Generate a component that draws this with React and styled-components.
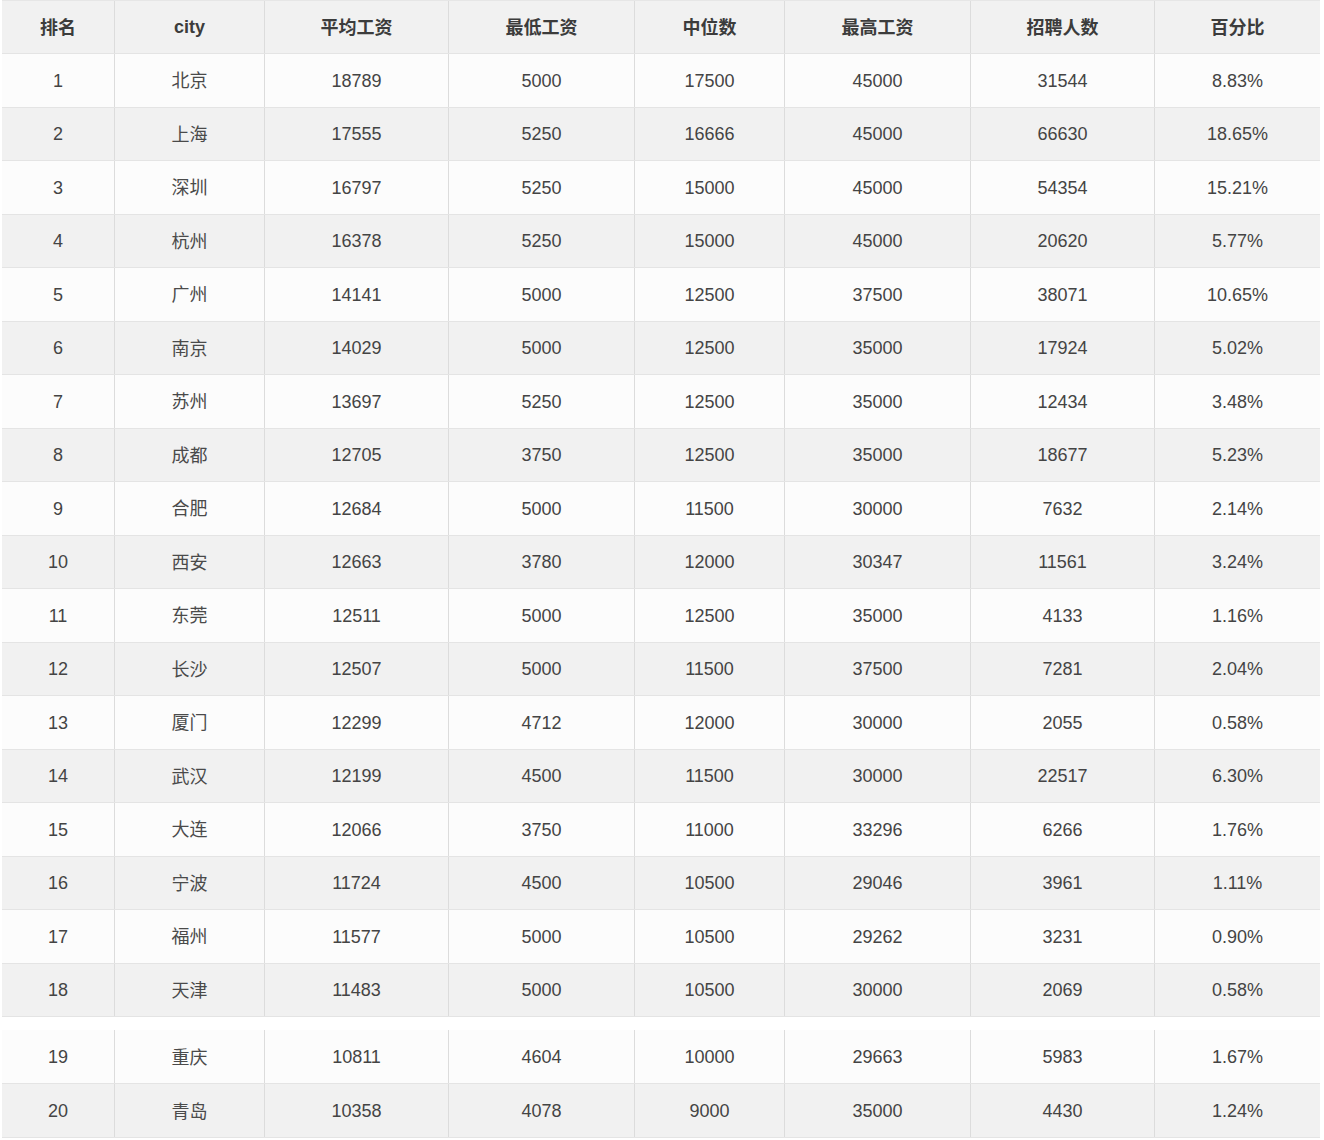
import React from "react";
import styled, { createGlobalStyle } from "styled-components";

const Global = createGlobalStyle`
  html, body { margin: 0; padding: 0; background: #ffffff; }
  body { font-family: "Liberation Sans", Arial, "Noto Sans CJK SC", sans-serif; }
`;

const COLS = "112px 150px 184px 186px 150px 186px 184px 166px";

const Page = styled.div`
  padding: 0 4px 0 2px;
  width: 1318px;
`;

const Table = styled.div`
  display: flex;
  flex-direction: column;
  margin-top: ${(p) => p.$gap || 0}px;
  border-top: ${(p) => (p.$top ? "1px solid #e6e6e6" : "none")};
`;

const Row = styled.div`
  display: grid;
  grid-template-columns: ${COLS};
  height: ${(p) => p.$h}px;
  background: ${(p) => (p.$shade ? "#f1f1f1" : "#fcfcfc")};
  border-bottom: 1px solid #e4e4e4;
  box-sizing: border-box;
`;

const Cell = styled.div`
  display: flex;
  align-items: center;
  justify-content: center;
  border-left: ${(p) => (p.$first ? "none" : "1px solid #dcdcdc")};
  font-family: ${(p) =>
    p.$cjk
      ? '"Noto Sans CJK SC", "Liberation Sans", sans-serif'
      : '"Liberation Sans", Arial, "Noto Sans CJK SC", sans-serif'};
  font-size: 18px;
  line-height: 1;
  font-weight: ${(p) => (p.$head ? 700 : 400)};
  color: ${(p) => (p.$head ? "#3c3c3c" : p.$cjk ? "#4a4a4a" : "#444444")};
  padding-top: ${(p) => (p.$cjk ? 0 : p.$head ? 0 : 1)}px;
  padding-bottom: ${(p) => (p.$cjk ? 2 : 0)}px;
  box-sizing: border-box;
`;

const header = ["排名", "city", "平均工资", "最低工资", "中位数", "最高工资", "招聘人数", "百分比"];

const data = [
  [1, "北京", 18789, 5000, 17500, 45000, 31544, "8.83%"],
  [2, "上海", 17555, 5250, 16666, 45000, 66630, "18.65%"],
  [3, "深圳", 16797, 5250, 15000, 45000, 54354, "15.21%"],
  [4, "杭州", 16378, 5250, 15000, 45000, 20620, "5.77%"],
  [5, "广州", 14141, 5000, 12500, 37500, 38071, "10.65%"],
  [6, "南京", 14029, 5000, 12500, 35000, 17924, "5.02%"],
  [7, "苏州", 13697, 5250, 12500, 35000, 12434, "3.48%"],
  [8, "成都", 12705, 3750, 12500, 35000, 18677, "5.23%"],
  [9, "合肥", 12684, 5000, 11500, 30000, 7632, "2.14%"],
  [10, "西安", 12663, 3780, 12000, 30347, 11561, "3.24%"],
  [11, "东莞", 12511, 5000, 12500, 35000, 4133, "1.16%"],
  [12, "长沙", 12507, 5000, 11500, 37500, 7281, "2.04%"],
  [13, "厦门", 12299, 4712, 12000, 30000, 2055, "0.58%"],
  [14, "武汉", 12199, 4500, 11500, 30000, 22517, "6.30%"],
  [15, "大连", 12066, 3750, 11000, 33296, 6266, "1.76%"],
  [16, "宁波", 11724, 4500, 10500, 29046, 3961, "1.11%"],
  [17, "福州", 11577, 5000, 10500, 29262, 3231, "0.90%"],
  [18, "天津", 11483, 5000, 10500, 30000, 2069, "0.58%"],
];

const data2 = [
  [19, "重庆", 10811, 4604, 10000, 29663, 5983, "1.67%"],
  [20, "青岛", 10358, 4078, 9000, 35000, 4430, "1.24%"],
];

function DataRow({ row, shade, h }) {
  return (
    <Row $shade={shade} $h={h}>
      {row.map((v, i) => (
        <Cell key={i} $first={i === 0} $cjk={i === 1}>
          {v}
        </Cell>
      ))}
    </Row>
  );
}

export default function App() {
  return (
    <>
      <Global />
      <Page>
        <Table $top>
          <Row $shade $h={53}>
            {header.map((h, i) => (
              <Cell key={i} $first={i === 0} $head $cjk={i !== 1}>
                {h}
              </Cell>
            ))}
          </Row>
          {data.map((r, i) => (
            <DataRow key={r[0]} row={r} shade={i % 2 === 1} h={53.5} />
          ))}
        </Table>
        <Table $gap={13}>
          {data2.map((r, i) => (
            <DataRow key={r[0]} row={r} shade={i % 2 === 1} h={54} />
          ))}
        </Table>
      </Page>
    </>
  );
}
